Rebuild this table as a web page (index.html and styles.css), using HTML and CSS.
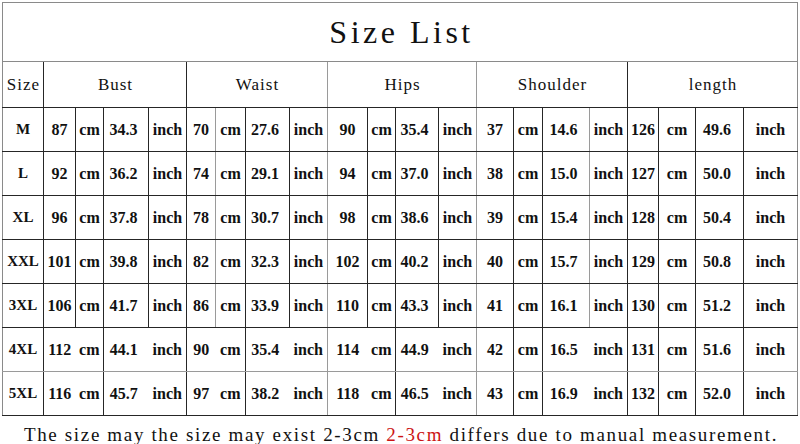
FILE: index.html
```html
<!DOCTYPE html>
<html lang="en">
<head>
<meta charset="utf-8">
<title>Size List</title>
<link rel="stylesheet" href="styles.css">
</head>
<body>
<div class="sheet">
  <table class="size-table">
    <colgroup>
      <col class="w41"><col class="w32"><col class="w28"><col class="w45"><col class="w38">
      <col class="w29"><col class="w30"><col class="w44"><col class="w38">
      <col class="w40"><col class="w28"><col class="w43"><col class="w38">
      <col class="w37"><col class="w29"><col class="w47"><col class="w38">
      <col class="w31"><col class="w37"><col class="w48"><col class="w54">
    </colgroup>
    <thead>
      <tr class="title-row"><th colspan="21" class="title">Size List</th></tr>
      <tr class="head-row">
        <th class="edge-l">Size</th>
        <th colspan="4">Bust</th>
        <th colspan="4" class="g">Waist</th>
        <th colspan="4" class="g">Hips</th>
        <th colspan="4">Shoulder</th>
        <th colspan="4" class="edge-r">length</th>
      </tr>
    </thead>
    <tbody>
      <tr>
        <td class="sz edge-l">M</td>
        <td>87</td><td>cm</td><td class="v">34.3</td><td>inch</td>
        <td class="g">70</td><td>cm</td><td class="v">27.6</td><td class="g">inch</td>
        <td>90</td><td>cm</td><td class="v">35.4</td><td class="g">inch</td>
        <td>37</td><td>cm</td><td class="v g">14.6</td><td>inch</td>
        <td>126</td><td>cm</td><td class="v">49.6</td><td class="edge-r">inch</td>
      </tr>
      <tr>
        <td class="sz edge-l">L</td>
        <td>92</td><td>cm</td><td class="v">36.2</td><td>inch</td>
        <td class="g">74</td><td>cm</td><td class="v">29.1</td><td class="g">inch</td>
        <td>94</td><td>cm</td><td class="v">37.0</td><td class="g">inch</td>
        <td>38</td><td>cm</td><td class="v g">15.0</td><td>inch</td>
        <td>127</td><td>cm</td><td class="v">50.0</td><td class="edge-r">inch</td>
      </tr>
      <tr>
        <td class="sz edge-l">XL</td>
        <td>96</td><td>cm</td><td class="v">37.8</td><td>inch</td>
        <td class="g">78</td><td>cm</td><td class="v">30.7</td><td class="g">inch</td>
        <td>98</td><td>cm</td><td class="v">38.6</td><td class="g">inch</td>
        <td>39</td><td>cm</td><td class="v g">15.4</td><td>inch</td>
        <td>128</td><td>cm</td><td class="v">50.4</td><td class="edge-r">inch</td>
      </tr>
      <tr>
        <td class="sz edge-l">XXL</td>
        <td>101</td><td>cm</td><td class="v">39.8</td><td>inch</td>
        <td class="g">82</td><td>cm</td><td class="v">32.3</td><td class="g">inch</td>
        <td>102</td><td>cm</td><td class="v">40.2</td><td class="g">inch</td>
        <td>40</td><td>cm</td><td class="v g">15.7</td><td>inch</td>
        <td>129</td><td>cm</td><td class="v">50.8</td><td class="edge-r">inch</td>
      </tr>
      <tr>
        <td class="sz edge-l">3XL</td>
        <td>106</td><td>cm</td><td class="v">41.7</td><td>inch</td>
        <td class="g">86</td><td>cm</td><td class="v">33.9</td><td class="g">inch</td>
        <td>110</td><td>cm</td><td class="v">43.3</td><td class="g">inch</td>
        <td>41</td><td>cm</td><td class="v g">16.1</td><td>inch</td>
        <td>130</td><td>cm</td><td class="v">51.2</td><td class="edge-r">inch</td>
      </tr>
      <tr class="grey-bottom">
        <td class="sz edge-l">4XL</td>
        <td class="m">112</td><td>cm</td><td class="v m">44.1</td><td>inch</td>
        <td class="m">90</td><td>cm</td><td class="v m">35.4</td><td class="g">inch</td>
        <td class="m">114</td><td>cm</td><td class="v m">44.9</td><td class="g">inch</td>
        <td>42</td><td>cm</td><td class="v m">16.5</td><td>inch</td>
        <td>131</td><td>cm</td><td class="v">51.6</td><td class="edge-r">inch</td>
      </tr>
      <tr>
        <td class="sz edge-l">5XL</td>
        <td class="m">116</td><td>cm</td><td class="v m">45.7</td><td>inch</td>
        <td class="m">97</td><td>cm</td><td class="v m">38.2</td><td class="g">inch</td>
        <td class="m">118</td><td>cm</td><td class="v m">46.5</td><td class="g">inch</td>
        <td>43</td><td>cm</td><td class="v m">16.9</td><td>inch</td>
        <td>132</td><td>cm</td><td class="v">52.0</td><td class="edge-r">inch</td>
      </tr>
    </tbody>
  </table>
  <p class="note">The size may the size may exist 2-3cm <span class="red">2-3cm</span> differs due to manual measurement.</p>
</div>
</body>
</html>
```

FILE: styles.css
```css
html, body {
  margin: 0;
  padding: 0;
  background: #ffffff;
}

.sheet {
  width: 800px;
  height: 444px;
  padding: 2px 0 0 2px;
  box-sizing: border-box;
  overflow: hidden;
  font-family: "Liberation Serif", "Noto Sans CJK SC", serif;
  color: #111111;
}

.size-table {
  border-collapse: collapse;
  table-layout: fixed;
  width: 796px;
}

.w28 { width: 28px; }
.w29 { width: 29px; }
.w30 { width: 30px; }
.w31 { width: 31px; }
.w32 { width: 32px; }
.w37 { width: 37px; }
.w38 { width: 38px; }
.w40 { width: 40px; }
.w41 { width: 41px; }
.w43 { width: 43px; }
.w44 { width: 44px; }
.w45 { width: 45px; }
.w47 { width: 47px; }
.w48 { width: 48px; }
.w54 { width: 54px; }

.size-table th,
.size-table td {
  border: 1px solid #262626;
  padding: 0;
  text-align: center;
  vertical-align: middle;
  white-space: nowrap;
  overflow: hidden;
}

.title-row { height: 59px; }
.head-row { height: 46px; }
.size-table tbody tr { height: 44px; }

.size-table .title {
  font-weight: normal;
  font-size: 32px;
  letter-spacing: 3.5px;
  padding-left: 3px;
  border-top-color: #8a8a8a;
  border-left-color: #8a8a8a;
  border-right-color: #8a8a8a;
  border-bottom-color: #8a8a8a;
}

.head-row th {
  font-weight: normal;
  font-size: 17px;
  letter-spacing: 1px;
  padding-left: 1px;
}

.size-table td {
  font-weight: bold;
  font-size: 16px;
}

.size-table td.sz {
  font-size: 15px;
}

.size-table td.v {
  padding-right: 5px;
}

.size-table .g {
  border-right-color: #9a9a9a;
}

.size-table .m {
  border-right-style: hidden;
}

.size-table .edge-l {
  border-left-color: #8a8a8a;
}

.size-table .edge-r {
  border-right-color: #8a8a8a;
}

.grey-bottom td {
  border-bottom-color: #9a9a9a;
}

.note {
  margin: 0;
  padding-top: 8px;
  text-align: center;
  font-size: 19px;
  letter-spacing: 1.65px;
  line-height: 22px;
  color: #111111;
}

.note .red {
  color: #cc1414;
}
```
